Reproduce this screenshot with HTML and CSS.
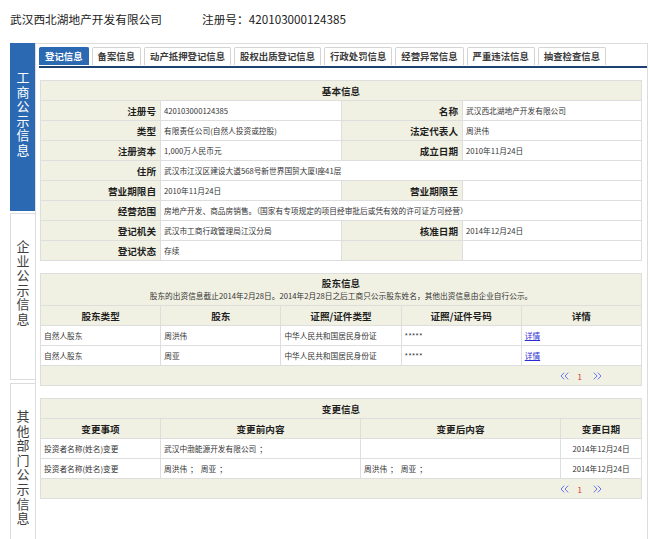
FILE: index.html
```html
<!DOCTYPE html>
<html lang="zh">
<head>
<meta charset="utf-8">
<title>企业信用信息公示</title>
<link rel="stylesheet" href="styles.css">
</head>
<body>
<header class="top">
  <span class="co">武汉西北湖地产开发有限公司</span>
  <span class="reg">注册号：420103000124385</span>
</header>
<div class="layout">
  <nav class="side">
    <div class="stab on">工商公示信息</div>
    <div class="stab mid">企业公示信息</div>
    <div class="stab last">其他部门公示信息</div>
  </nav>
  <main class="panel">
    <div class="tabs">
      <span class="tab on">登记信息</span>
      <span class="tab">备案信息</span>
      <span class="tab">动产抵押登记信息</span>
      <span class="tab">股权出质登记信息</span>
      <span class="tab">行政处罚信息</span>
      <span class="tab">经营异常信息</span>
      <span class="tab">严重违法信息</span>
      <span class="tab">抽查检查信息</span>
    </div>

    <table class="tbl basic">
      <colgroup><col class="c120"><col class="c181"><col class="c121"><col></colgroup>
      <tr><th colspan="4" class="cap">基本信息</th></tr>
      <tr><th class="lab">注册号</th><td>420103000124385</td><th class="lab">名称</th><td>武汉西北湖地产开发有限公司</td></tr>
      <tr><th class="lab">类型</th><td>有限责任公司(自然人投资或控股)</td><th class="lab">法定代表人</th><td>周洪伟</td></tr>
      <tr><th class="lab">注册资本</th><td>1,000万人民币元</td><th class="lab">成立日期</th><td>2010年11月24日</td></tr>
      <tr><th class="lab">住所</th><td colspan="3">武汉市江汉区建设大道568号新世界国贸大厦I座41层</td></tr>
      <tr><th class="lab">营业期限自</th><td>2010年11月24日</td><th class="lab">营业期限至</th><td></td></tr>
      <tr><th class="lab">经营范围</th><td colspan="3">房地产开发、商品房销售。（国家有专项规定的项目经审批后或凭有效的许可证方可经营）</td></tr>
      <tr><th class="lab">登记机关</th><td>武汉市工商行政管理局江汉分局</td><th class="lab">核准日期</th><td>2014年12月24日</td></tr>
      <tr><th class="lab">登记状态</th><td>存续</td><th class="lab"></th><td></td></tr>
    </table>

    <table class="tbl share">
      <tr><th colspan="5" class="cap two"><div class="ttl">股东信息</div><div class="sub">股东的出资信息截止2014年2月28日。2014年2月28日之后工商只公示股东姓名，其他出资信息由企业自行公示。</div></th></tr>
      <tr class="hd"><th>股东类型</th><th>股东</th><th>证照/证件类型</th><th>证照/证件号码</th><th>详情</th></tr>
      <tr><td>自然人股东</td><td>周洪伟</td><td>中华人民共和国居民身份证</td><td>*****</td><td><a class="lnk" href="#">详情</a></td></tr>
      <tr><td>自然人股东</td><td>周亚</td><td>中华人民共和国居民身份证</td><td>*****</td><td><a class="lnk" href="#">详情</a></td></tr>
      <tr><th colspan="5" class="pg">
        <svg class="chev" width="9" height="8" viewBox="0 0 9 8"><path d="M4.2 0.6L1 4L4.2 7.4M8.2 0.6L5 4L8.2 7.4"/></svg><span class="num">1</span><svg class="chev" width="9" height="8" viewBox="0 0 9 8"><path d="M0.8 0.6L4 4L0.8 7.4M4.8 0.6L8 4L4.8 7.4"/></svg>
      </th></tr>
    </table>

    <table class="tbl change">
      <colgroup><col class="c120"><col class="c200"><col class="c200"><col></colgroup>
      <tr><th colspan="4" class="cap">变更信息</th></tr>
      <tr class="hd"><th>变更事项</th><th>变更前内容</th><th>变更后内容</th><th>变更日期</th></tr>
      <tr><td>投资者名称(姓名)变更</td><td>武汉中渤能源开发有限公司<span class="semi">；</span></td><td></td><td class="ctr">2014年12月24日</td></tr>
      <tr><td>投资者名称(姓名)变更</td><td>周洪伟<span class="semi">；</span>周亚<span class="semi">；</span></td><td>周洪伟<span class="semi">；</span>周亚<span class="semi">；</span></td><td class="ctr">2014年12月24日</td></tr>
      <tr><th colspan="4" class="pg">
        <svg class="chev" width="9" height="8" viewBox="0 0 9 8"><path d="M4.2 0.6L1 4L4.2 7.4M8.2 0.6L5 4L8.2 7.4"/></svg><span class="num">1</span><svg class="chev" width="9" height="8" viewBox="0 0 9 8"><path d="M0.8 0.6L4 4L0.8 7.4M4.8 0.6L8 4L4.8 7.4"/></svg>
      </th></tr>
    </table>
  </main>
</div>
</body>
</html>
```

FILE: styles.css
```css
html { overflow: hidden; }
body {
  margin: 0;
  background: #fff;
  color: #333;
  font-family: "Noto Sans CJK SC", "Noto Sans", sans-serif;
}

.top {
  height: 36px;
  display: flex;
  align-items: center;
  padding-left: 10px;
  font-size: 11.7px;
  color: #222;
}
.top .reg { margin-left: 40px; }

.layout {
  display: flex;
  height: 500px;
  margin-top: 7px;
  padding-left: 10px;
}

.side {
  width: 25px;
  flex: none;
  display: flex;
  flex-direction: column;
  gap: 2px;
}
.stab {
  box-sizing: border-box;
  border: 1px solid #dcdcdc;
  border-right: 0;
  background: #fff;
  color: #3e3e3e;
  font-size: 13px;
  line-height: 14.6px;
  text-align: center;
  padding: 25px 0 0;
}
.stab.on {
  height: 168px;
  background: #2b69b2;
  border-color: #2b69b2;
  color: #fff;
  padding-top: 26px;
}
.stab.mid { height: 167px; margin-bottom: 1px; }
.stab.last { flex: 1; }

.panel {
  flex: 1;
  margin-right: 2px;
  border: 1px solid #dcdcdc;
  border-bottom: 0;
  padding: 3px 0 0 3px;
}

.tabs {
  display: flex;
  gap: 3px;
  padding-bottom: 1px;
  border-bottom: 2px solid #1b4273;
}
.tab {
  box-sizing: border-box;
  height: 18px;
  padding: 0 5px;
  border: 1px solid #d4d4d4;
  border-bottom: 0;
  border-radius: 2px 2px 0 0;
  background: #fff;
  color: #3c3c3c;
  font-size: 9.4px;
  font-weight: bold;
  line-height: 17px;
  white-space: nowrap;
}
.tab.on {
  background: #2b69b2;
  border-color: #2b69b2;
  color: #fff;
}

.tbl {
  width: 602px;
  margin: 12px 0 0 1px;
  border-collapse: collapse;
  table-layout: fixed;
}
.tbl td, .tbl th {
  height: 19px;
  padding: 0 3px;
  border: 1px solid #dedede;
  font-size: 7.7px;
  color: #333;
  text-align: left;
  font-weight: normal;
  white-space: nowrap;
  overflow: hidden;
}
.tbl th.lab {
  background: #f1f1e3;
  color: #1e1e1e;
  font-weight: bold;
  font-size: 9.6px;
  text-align: right;
  padding-right: 4px;
}
.tbl th.cap {
  background: #f1f1e3;
  color: #1e1e1e;
  font-weight: bold;
  font-size: 9.6px;
  text-align: center;
}
.tbl th.cap.two {
  height: 31px;
  padding: 0;
}
.cap .ttl { line-height: 13px; }
.cap .sub {
  font-size: 7.7px;
  font-weight: normal;
  line-height: 12px;
  color: #333;
}
.tbl tr.hd th {
  background: #f1f1e3;
  color: #1e1e1e;
  font-weight: bold;
  font-size: 9.6px;
  text-align: center;
}
.tbl th.pg {
  background: #f1f1e3;
  text-align: right;
  padding-right: 39px;
}
.chev {
  vertical-align: middle;
  fill: none;
  stroke: #6675f0;
  stroke-width: 1;
}
.num {
  display: inline-block;
  margin: 0 11px 0 9px;
  color: #e03030;
  font-size: 8px;
  vertical-align: middle;
}
.lnk { color: #2c2cd4; text-decoration: underline; }
.tbl td.ctr { text-align: center; }
.semi { margin: 0 3px; }

.c120 { width: 120px; }
.c121 { width: 121px; }
.c181 { width: 181px; }
.c200 { width: 200px; }
```
